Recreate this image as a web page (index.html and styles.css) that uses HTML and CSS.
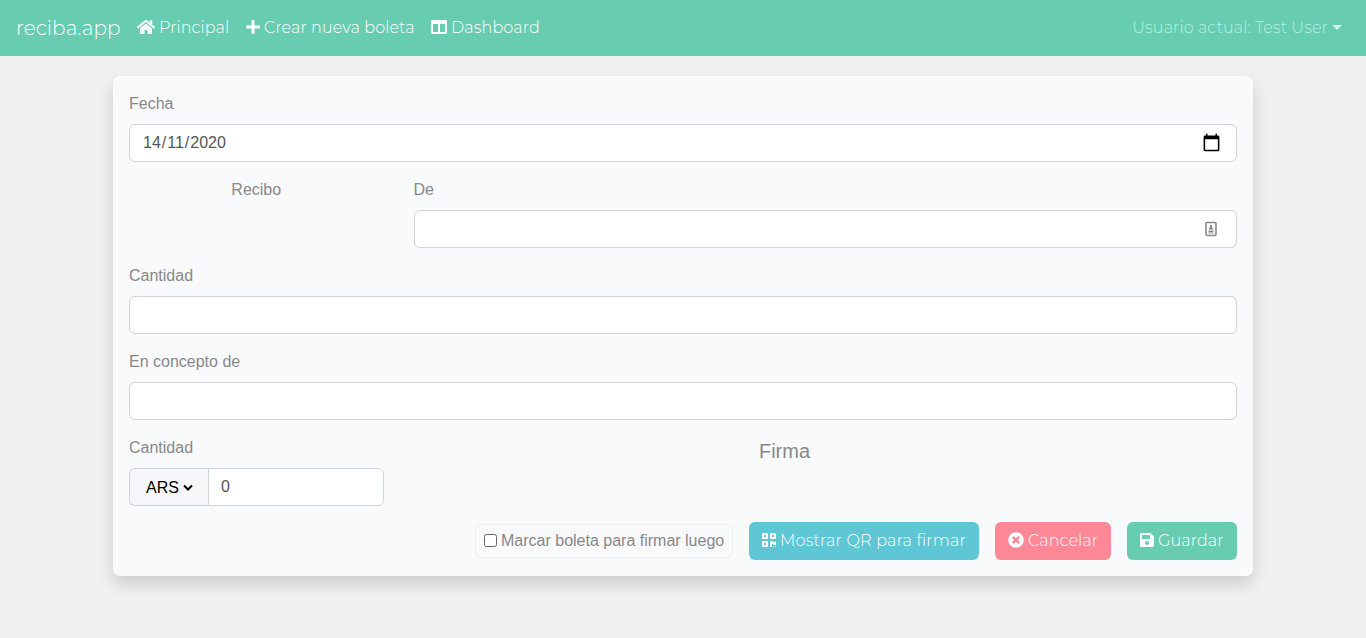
FILE: index.html
```html
<!DOCTYPE html>
<html lang="es">
<head>
<meta charset="utf-8">
<title>reciba.app</title>
<link rel="stylesheet" href="styles.css">
</head>
<body>
<nav class="navbar">
  <a class="brand">reciba.app</a>
  <a class="nav-link home"><svg class="icon" width="18" height="16" viewBox="0 0 576 512"><path d="M280.37 148.26L96 300.11V464a16 16 0 0 0 16 16l112.06-.29a16 16 0 0 0 15.92-16V368a16 16 0 0 1 16-16h64a16 16 0 0 1 16 16v95.64a16 16 0 0 0 16 16.05L464 480a16 16 0 0 0 16-16V300L295.67 148.26a12.19 12.19 0 0 0-15.3 0zM571.6 251.47L488 182.56V44.05a12 12 0 0 0-12-12h-56a12 12 0 0 0-12 12v72.61L318.47 43a48 48 0 0 0-61 0L4.34 251.47a12 12 0 0 0-1.6 16.9l25.5 31A12 12 0 0 0 45.15 301l235.22-193.74a12.19 12.19 0 0 1 15.3 0L530.9 301a12 12 0 0 0 16.9-1.6l25.5-31a12 12 0 0 0-1.7-16.93z"/></svg><span>Principal</span></a>
  <a class="nav-link create"><svg class="icon" width="14" height="16" viewBox="0 0 448 512"><path d="M416 208H272V64c0-17.67-14.33-32-32-32h-32c-17.67 0-32 14.33-32 32v144H32c-17.67 0-32 14.33-32 32v32c0 17.67 14.33 32 32 32h144v144c0 17.67 14.33 32 32 32h32c17.67 0 32-14.33 32-32V304h144c17.67 0 32-14.33 32-32v-32c0-17.67-14.33-32-32-32z"/></svg><span>Crear nueva boleta</span></a>
  <a class="nav-link dash"><svg class="icon" width="16" height="16" viewBox="0 0 512 512"><path d="M464 32H48C21.49 32 0 53.49 0 80v352c0 26.51 21.49 48 48 48h416c26.51 0 48-21.49 48-48V80c0-26.51-21.49-48-48-48zM224 416H64V160h160v256zm224 0H288V160h160v256z"/></svg><span>Dashboard</span></a>
  <a class="nav-link user"><span>Usuario actual: Test User</span><i class="caret"></i></a>
</nav>
<form class="card">
  <div class="group">
    <label>Fecha</label>
    <div class="control"><span class="date">14<span class="slash">/</span>11<span class="slash">/</span>2020</span>
      <svg class="calendar" width="19" height="19" viewBox="0 0 24 24"><path d="M20 3h-1V1h-2v2H7V1H5v2H4c-1.100 0-2 .9-2 2v16c0 1.100.9 2 2 2h16c1.100 0 2-.9 2-2V5c0-1.100-.9-2-2-2zm0 18H4V8h16v13z"/></svg>
    </div>
  </div>
  <div class="row">
    <div class="group receipt"><label>Recibo</label></div>
    <div class="group">
      <label>De</label>
      <div class="control"><svg class="contact" width="14" height="16" viewBox="0 0 14 16"><rect x="2" y="1.500" width="10" height="13" rx="1" fill="#fff" stroke="#888" stroke-width="1.600"/><path d="M6 4h2v2l1.500 2.500h-5L6 6zM4.500 9.500h5V11h-5zM4.500 11.500h5v1h-5z" fill="#888"/></svg></div>
    </div>
  </div>
  <div class="group"><label>Cantidad</label><input class="control"></div>
  <div class="group"><label>En concepto de</label><input class="control"></div>
  <div class="row">
    <div class="group">
      <label>Cantidad</label>
      <div class="amount">
        <div class="currency">ARS<svg width="10" height="8" viewBox="0 0 10 8"><path d="M1 1.500l4 4 4-4" fill="none" stroke="#000" stroke-width="2"/></svg></div>
        <input class="control" value="0">
      </div>
    </div>
    <div class="signature">Firma</div>
  </div>
  <div class="actions">
    <label class="later"><span class="check"></span>Marcar boleta para firmar luego</label>
    <a class="btn info"><svg class="icon" width="14" height="16" viewBox="0 0 448 512"><path d="M0 224h192V32H0v192zM64 96h64v64H64V96zm192-64v192h192V32H256zm128 128h-64V96h64v64zM0 480h192V288H0v192zm64-128h64v64H64v-64zm352-64h32v128h-96v-32h-32v96h-64V288h96v32h64v-32zm0 160h32v32h-32v-32zm-64 0h32v32h-32v-32z"/></svg><span>Mostrar QR para firmar</span></a>
    <a class="btn danger"><svg class="icon" width="16" height="16" viewBox="0 0 512 512"><path d="M256 8C119 8 8 119 8 256s111 248 248 248 248-111 248-248S393 8 256 8zm121.600 313.100c4.700 4.700 4.700 12.300 0 17L338 377.600c-4.700 4.700-12.300 4.700-17 0L256 312l-65.100 65.600c-4.700 4.700-12.300 4.700-17 0L134.400 338c-4.700-4.700-4.700-12.300 0-17l65.600-65-65.600-65.100c-4.700-4.700-4.700-12.300 0-17l39.600-39.600c4.700-4.700 12.300-4.700 17 0l65 65.700 65.100-65.600c4.700-4.700 12.300-4.700 17 0l39.600 39.600c4.700 4.700 4.700 12.300 0 17L312 256l65.600 65.100z"/></svg><span>Cancelar</span></a>
    <a class="btn success"><svg class="icon" width="14" height="16" viewBox="0 0 448 512"><path d="M433.941 129.941l-83.882-83.882A48 48 0 0 0 316.118 32H48C21.490 32 0 53.490 0 80v352c0 26.510 21.490 48 48 48h352c26.510 0 48-21.490 48-48V163.882a48 48 0 0 0-14.059-33.941zM224 416c-35.346 0-64-28.654-64-64 0-35.346 28.654-64 64-64s64 28.654 64 64c0 35.346-28.654 64-64 64zm96-304.520V212c0 6.627-5.373 12-12 12H76c-6.627 0-12-5.373-12-12V108c0-6.627 5.373-12 12-12h228.520c3.183 0 6.235 1.264 8.485 3.515l3.480 3.480A11.996 11.996 0 0 1 320 111.480z"/></svg><span>Guardar</span></a>
  </div>
</form>
</body>
</html>
```

FILE: styles.css
```css
* { box-sizing: border-box; }
body {
  margin: 0;
  height: 638px;
  background: #f0f0f0;
  color: #888;
  font: 16px/24px "Liberation Sans", Arial, sans-serif;
}
.navbar {
  display: flex;
  align-items: center;
  height: 56px;
  padding: 0 24px 2px 16px;
  background: #67ccb0;
  color: #fff;
  font-family: Montserrat, Inter, sans-serif;
  font-weight: 300;
}
.brand { width: 121px; padding-top: 2px; font-size: 20px; letter-spacing: .1px; white-space: nowrap; }
.nav-link, .btn { display: flex; align-items: center; gap: 4px; white-space: nowrap; }
.nav-link span, .btn span { padding-top: 2px; letter-spacing: .11px; }
.icon { fill: #fff; flex: none; }
.home { width: 109px; }
.create { width: 185px; }
.dash { width: 110px; }
.user { margin-left: auto; color: #b4f0e0; }
.caret { border: 5px solid transparent; border-top-color: #d0f5eb; border-bottom: 0; }
.card {
  width: 1140px;
  height: 500px;
  margin: 20px auto 0;
  padding: 16px;
  border-radius: 7px;
  background: #f9fafc;
  box-shadow: 0 8px 16px rgba(0, 0, 0, .15);
}
.group { margin-bottom: 16px; }
label { display: block; }
.group label { margin-bottom: 8px; }
.control {
  display: flex;
  align-items: center;
  justify-content: space-between;
  width: 100%;
  height: 38px;
  padding: 0 12px;
  border: 1px solid #ced4da;
  border-radius: 6px;
  background: #fff;
  color: #555;
  font: inherit;
}
.date { padding-left: 1px; }
.slash { padding: 0 1px; }
.calendar { margin: 0 3px 1px 0; }
.contact { margin: 0 6px 0 auto; }
.row { display: grid; grid-template-columns: 254.5px 1fr; column-gap: 30px; }
.receipt { text-align: center; }
.amount { display: flex; }
.currency {
  display: flex;
  align-items: center;
  gap: 4px;
  width: 80px;
  flex: none;
  padding: 1px 0 0 16px;
  border: 1px solid #ced4da;
  border-right: 0;
  border-radius: 6px 0 0 6px;
  background: #f7f7f9;
  color: #000;
}
.amount .control { margin-left: -1px; flex: 1; min-width: 0; border-radius: 0 6px 6px 0; }
.signature { width: 742px; text-align: center; font-size: 20px; line-height: 30px; }
.actions { display: flex; justify-content: flex-end; align-items: center; gap: 16px; }
.later {
  display: flex;
  align-items: center;
  gap: 4px;
  width: 258px;
  height: 34px;
  padding-left: 8px;
  border: 1px solid #eeeff1;
  border-radius: 6px;
  white-space: nowrap;
}
.check { width: 13px; height: 13px; margin-top: -2px; border: 1px solid #666; border-radius: 2.5px; background: #fff; }
.btn {
  height: 38px;
  padding: 0 0 2px 13px;
  border-radius: 6px;
  color: #fff;
  font-family: Montserrat, Inter, sans-serif;
  font-weight: 300;
}
.info { width: 230px; background: #5fc6d5; }
.info span { letter-spacing: .22px; }
.danger { width: 116px; background: #ff8896; }
.success { width: 110px; background: #67ccb0; }
```
